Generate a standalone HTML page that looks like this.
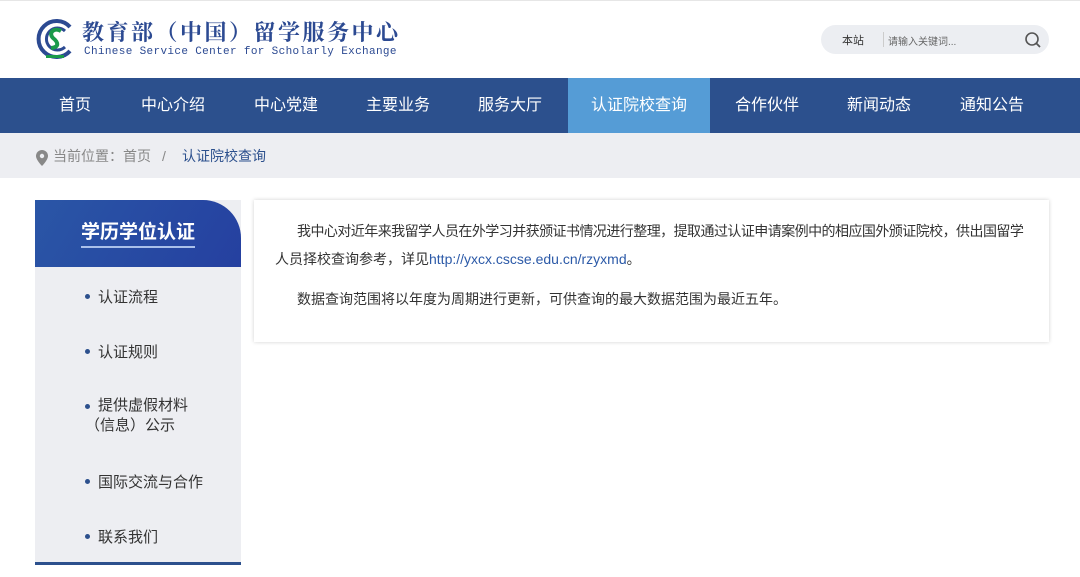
<!DOCTYPE html>
<html><head><meta charset="utf-8"><style>
*{margin:0;padding:0;box-sizing:border-box}
body{width:1080px;height:577px;overflow:hidden;background:#fff;font-family:"Liberation Sans","Noto Sans CJK SC",sans-serif;position:relative}
.abs{position:absolute}
.nav{top:78px;left:0;width:1080px;height:55px;background:#2c508d}
.nav span{position:absolute;top:0;height:55px;line-height:55px;color:#fff;font-size:16px;text-align:center}
.bc{top:133px;left:0;width:1080px;height:45px;background:#edeef2;font-size:14px;color:#888;line-height:47px}
.side{left:35px;top:200px;width:206px;height:365px;background:#edeef2;border-bottom:3px solid #2c508d}
.sh{left:35px;top:200px;width:206px;height:67px;background:linear-gradient(120deg,#2a56a6,#2540a0);border-top-right-radius:38px;color:#fff;font-size:19px;font-weight:bold;text-align:center;line-height:66px}
.li{left:85px;font-size:15px;color:#333}
.li:before{content:"";position:absolute;left:0;top:8px;width:5px;height:5px;border-radius:50%;background:#2c508d}
.li b{font-weight:normal;margin-left:13px}
.box{left:254px;top:200px;width:795px;height:142px;background:#fff;box-shadow:0 0 4px rgba(0,0,0,.18);font-size:14px;color:#333}
</style></head><body>
<div class="abs" style="left:0;top:0;width:1080px;height:1px;background:#e6e6e6"></div>
<svg class="abs" style="left:34px;top:17px" width="42" height="44" viewBox="0 0 42 44">
<path d="M36 10 A18 18 0 1 0 36 34" fill="none" stroke="#2c4a92" stroke-width="4"/>
<path d="M31 14 A11 11 0 1 0 31 30" fill="none" stroke="#2c4a92" stroke-width="3"/>
<path d="M27 14 C20 10 14 16 19 21 C24 25 26 30 17 31" fill="none" stroke="#1a9a4a" stroke-width="4"/>
<rect x="12" y="38" width="18" height="3" fill="#1a9a4a"/></svg>
<div class="abs" style="left:82px;top:19px;font-size:22px;color:#2c4a92;letter-spacing:2.5px;font-family:'Noto Serif CJK SC',serif;font-weight:bold;line-height:26px">教育部（中国）留学服务中心</div>
<div class="abs" style="left:84px;top:46px;font-size:11px;color:#2c4a92;font-family:'Liberation Mono',monospace;letter-spacing:0.35px">Chinese Service Center for Scholarly Exchange</div>
<div class="abs" style="left:821px;top:25px;width:228px;height:29px;border-radius:15px;background:#eceef2"></div>
<div class="abs" style="left:842px;top:32px;font-size:11px;color:#333">本站</div>
<div class="abs" style="left:883px;top:32px;width:1px;height:15px;background:#ccc"></div>
<div class="abs" style="left:888px;top:33px;font-size:10px;color:#666">请输入关键词...</div>
<svg class="abs" style="left:1024px;top:31px" width="18" height="18" viewBox="0 0 18 18"><circle cx="8" cy="8" r="6" fill="none" stroke="#555" stroke-width="1.6"/><path d="M12.5 12.5 L16 16" stroke="#555" stroke-width="1.8"/></svg>
<div class="abs nav">
<span style="left:50px;width:50px">首页</span>
<span style="left:133px;width:80px">中心介绍</span>
<span style="left:246px;width:80px">中心党建</span>
<span style="left:358px;width:80px">主要业务</span>
<span style="left:470px;width:80px">服务大厅</span>
<span style="left:568px;width:142px;background:#559cd6">认证院校查询</span>
<span style="left:727px;width:80px">合作伙伴</span>
<span style="left:839px;width:80px">新闻动态</span>
<span style="left:952px;width:80px">通知公告</span>
</div>
<div class="abs bc"><svg class="abs" style="left:36px;top:17px" width="12" height="16" viewBox="0 0 12 16"><path d="M6 0A6 6 0 0 0 0 6C0 10 6 16 6 16S12 10 12 6A6 6 0 0 0 6 0Z" fill="#888"/><circle cx="6" cy="6" r="2.2" fill="#edeef2"/></svg>
<span class="abs" style="left:53px">当前位置：首页</span><span class="abs" style="left:162px">/</span><span class="abs" style="left:182px;color:#2c508d">认证院校查询</span></div>
<div class="abs side"></div>
<div class="abs sh"><span style="border-bottom:2px solid #aac0ea;padding-bottom:3px">学历学位认证</span></div>
<div class="abs li" style="top:286px"><b>认证流程</b></div>
<div class="abs li" style="top:341px"><b>认证规则</b></div>
<div class="abs li" style="top:396px;width:140px;line-height:20px"><b>提供虚假材料</b><br>（信息）公示</div>
<div class="abs li" style="top:471px"><b>国际交流与合作</b></div>
<div class="abs li" style="top:526px"><b>联系我们</b></div>
<div class="abs box">
<p class="abs" style="left:21px;top:17px;width:790px;line-height:28px;text-indent:22px;white-space:nowrap"><span style="letter-spacing:-0.55px">我中心对近年来我留学人员在外学习并获颁证书情况进行整理，提取通过认证申请案例中的相应国外颁证院校，供出国留学</span><br>人员择校查询参考，详见<span style="color:#2c5aa8">http://yxcx.cscse.edu.cn/rzyxmd</span>。</p>
<p class="abs" style="left:43px;top:85px;line-height:28px">数据查询范围将以年度为周期进行更新，可供查询的最大数据范围为最近五年。</p>
</div>
</body></html>
